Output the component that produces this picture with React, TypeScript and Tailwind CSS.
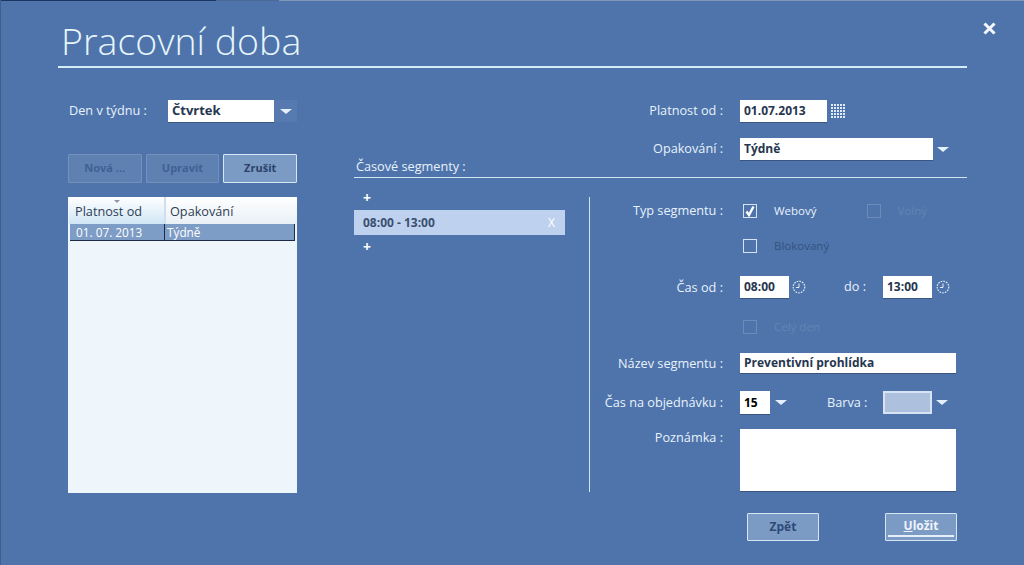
const font = "font-['Open_Sans','Noto_Sans',sans-serif]";

function Caret({ className = "" }: { className?: string }) {
  return (
    <svg width="12" height="5" viewBox="0 0 12 5" className={className}>
      <path d="M0 0h12L6 5z" fill="#e4f0fb" />
    </svg>
  );
}

function Label({ children }: { children: string }) {
  return <div className="w-[150px] shrink-0 pr-[17px] text-right text-[12.7px] leading-[17px] text-[#e8f2fb]">{children}</div>;
}

function Field({ value, className = "" }: { value?: string; className?: string }) {
  return (
    <div className={`flex items-center bg-white pl-1 text-[12px] font-bold text-[#26364f] shadow-[0_1px_0_#3a5680] ${className}`}>
      {value}
    </div>
  );
}

function Box({ checked, dim }: { checked?: boolean; dim?: boolean }) {
  return (
    <div className={`flex h-[14px] w-[14px] shrink-0 items-center justify-center border ${dim ? "border-[#6c8bb8]" : "border-[#d5e4f4]"}`}>
      {checked && (
        <svg width="12" height="12" viewBox="0 0 12 12">
          <path d="M2.5 6.5L5 10l4.5-8.5" fill="none" stroke="#fff" strokeWidth="2.4" />
        </svg>
      )}
    </div>
  );
}

function Option({ text, color, checked, dim }: { text: string; color: string; checked?: boolean; dim?: boolean }) {
  return (
    <div className="flex items-center">
      <Box checked={checked} dim={dim} />
      <span className={`ml-[17px] text-[11.5px] ${color}`}>{text}</span>
    </div>
  );
}

function ActionButton({ text, active }: { text: string; active?: boolean }) {
  return (
    <div
      className={`flex h-[29px] w-[74px] items-center justify-center rounded-[1px] border text-[11px] font-bold ${
        active ? "border-[#d5e6f5] bg-[#7b9ac4] text-[#2a4269]" : "border-[#7391bd] bg-[#5f81b2] text-[#3f6093]"
      }`}
    >
      {text}
    </div>
  );
}

function CalendarIcon() {
  return (
    <svg width="15" height="15" viewBox="0 0 15 15" className="ml-[4px]">
      <path d="M0 1h15M0 4h15M0 7h15M0 10h15M0 13h15" stroke="#dfeaf6" fill="none" strokeWidth="2" strokeDasharray="2 1" />
    </svg>
  );
}

function ClockIcon({ className = "" }: { className?: string }) {
  return (
    <svg width="14" height="14" viewBox="0 0 14 14" className={className}>
      <circle cx="7" cy="7" r="5.8" fill="none" stroke="#e4eef8" strokeWidth="1.2" strokeDasharray="1.6 1.1" />
      <path d="M7 3.5V7.5H4" fill="none" stroke="#e4eef8" />
    </svg>
  );
}

export default function App() {
  return (
    <div className={`relative flex h-[565px] w-[1024px] flex-col overflow-hidden border-l border-[#3f5f8f] bg-[#4e74ab] pl-[57px] pr-[57px] ${font}`}>
      {/* leftover of the window behind the dialog */}
      <div className="absolute left-0 top-0 flex h-[1px] w-full">
        <div className="w-[215px] bg-[#1d3560]" />
        <div className="w-[63px] bg-[#4a6a9c]" />
        <div className="flex-1 bg-[#8195b8]" />
      </div>

      <button className="absolute right-[28px] top-[22px] text-white">
        <svg width="13" height="13" viewBox="0 0 13 13">
          <path d="M1.5 1.5l10 10M11.5 1.5l-10 10" stroke="#f2f8fd" strokeWidth="3" />
        </svg>
      </button>

      <header className="h-[68px] shrink-0 border-b-2 border-[#d4eef7] pl-[3px] pt-[15px]">
        <h1 className="text-[37.5px] leading-[51px] font-light text-[#e6f5fb]">Pracovní doba</h1>
      </header>

      <div className="flex flex-1 pl-[10px] pt-[32px]">
        <section className="w-[229px] shrink-0">
          <div className="flex h-[22px] items-center">
            <span className="w-[100px] pl-[1px] text-[12.7px] text-[#e8f2fb]">Den v týdnu :</span>
            <Field value="Čtvrtek" className="h-[22px] w-[106px] text-[13px]" />
            <div className="flex h-[22px] w-[23px] items-center justify-center bg-[#5679af]">
              <Caret />
            </div>
          </div>

          <div className="mt-[32px] flex gap-[4px]">
            <ActionButton text="Nová ..." />
            <ActionButton text="Upravit" />
            <ActionButton text="Zrušit" active />
          </div>

          <div className="mt-[14px] h-[296px] w-[229px] bg-[#eef6fc]">
            <div className="flex h-[27px] pl-[1px] text-[12.7px] text-[#2d3d55]">
              <div className="relative w-[97px] border-r-2 border-[#cfdfee] bg-gradient-to-b from-white to-[#cfe6f5] pl-[6px] pt-[6px] leading-[17px]">
                Platnost od
                <svg width="6" height="3" viewBox="0 0 6 3" className="absolute left-[45px] top-[3px]">
                  <path d="M0 0h6L3 3z" fill="#8b97a8" />
                </svg>
              </div>
              <div className="flex-1 bg-gradient-to-b from-white to-[#e8f0f6] pl-[4px] pt-[6px] leading-[17px]">Opakování</div>
            </div>
            <div className="mx-[2px] flex h-[17px] border-b border-r border-[#1c2b45] bg-[#7d9cc6] text-[11.8px] leading-[16px] text-white">
              <div className="w-[95px] border-r border-[#1c2b45] pl-[6px]">01. 07. 2013</div>
              <div className="pl-[2px]">Týdně</div>
            </div>
          </div>
        </section>

        <section className="ml-[57px] flex-1">
          <div className="flex h-[22px] items-center pl-[286px]">
            <div className="w-[100px] shrink-0 pr-[17px] text-right text-[12.7px] text-[#e8f2fb]">Platnost od :</div>
            <Field value="01.07.2013" className="h-[22px] w-[87px]" />
            <CalendarIcon />
          </div>
          <div className="mt-[16px] flex h-[22px] items-center pl-[286px]">
            <div className="w-[100px] shrink-0 pr-[17px] text-right text-[12.7px] text-[#e8f2fb]">Opakování :</div>
            <Field value="Týdně" className="h-[22px] w-[193px]" />
            <Caret className="ml-[4px]" />
          </div>

          <div className="flex h-[18px] items-center border-b border-[#cfe6f2] pb-[3px] pl-[2px] text-[12.7px] text-[#e8f2fb]">
            Časové segmenty :
          </div>

          <div className="flex pt-[19px]">
            <div className="-mt-[6px] w-[211px] shrink-0">
              <div className="h-[14px] pl-[9px] text-[14px] font-bold leading-[14px] text-white">+</div>
              <div className="mt-[5px] flex h-[25px] items-center justify-between bg-[#bed2ef] pl-[9px] pr-[10px] text-[12px] font-bold text-[#3a4f70]">
                <span>08:00 - 13:00</span>
                <span className="font-normal text-white">X</span>
              </div>
              <div className="mt-[5px] h-[14px] pl-[9px] text-[14px] font-bold leading-[14px] text-white">+</div>
            </div>

            <div className="ml-[24px] h-[295px] w-[1px] bg-[#cfe6f2]" />

            <div className="-mt-[1px] flex flex-1 flex-col">
              <div className="flex h-[29px] items-center">
                <Label>Typ segmentu :</Label>
                <div className="ml-[3px]">
                  <Option text="Webový" color="text-[#e8f2fb]" checked />
                </div>
                <div className="ml-[50px]">
                  <Option text="Volný" color="text-[#6384b5]" dim />
                </div>
              </div>
              <div className="mt-[14px] flex h-[14px] items-center pl-[153px]">
                <Option text="Blokovaný" color="text-[#34527f]" />
              </div>

              <div className="mt-[23px] flex h-[22px] items-center">
                <Label>Čas od :</Label>
                <Field value="08:00" className="h-[22px] w-[49px]" />
                <ClockIcon className="ml-[3px]" />
                <span className="ml-[38px] w-[39px] text-[12.7px] text-[#e8f2fb]">do :</span>
                <Field value="13:00" className="h-[22px] w-[49px]" />
                <ClockIcon className="ml-[4px]" />
              </div>

              <div className="mt-[22px] flex h-[14px] items-center pl-[153px]">
                <Option text="Celý den" color="text-[#6384b5]" dim />
              </div>

              <div className="mt-[19px] flex h-[20px] items-center">
                <Label>Název segmentu :</Label>
                <Field value="Preventivní prohlídka" className="h-[20px] w-[216px]" />
              </div>

              <div className="mt-[18px] flex h-[23px] items-center">
                <Label>Čas na objednávku :</Label>
                <Field value="15" className="h-[23px] w-[30px] text-black" />
                <Caret className="ml-[5px]" />
                <span className="ml-[40px] w-[56px] text-[12.7px] text-[#e8f2fb]">Barva :</span>
                <div className="h-[23px] w-[49px] border-2 border-[#d6e3f2] bg-[#adc1de]" />
                <Caret className="ml-[4px]" />
              </div>

              <div className="mt-[15px] flex">
                <Label>Poznámka :</Label>
                <Field className="h-[62px] w-[216px]" />
              </div>
            </div>
          </div>

          <div className="mt-[21px] flex pl-[393px]">
            <div className="flex h-[28px] w-[72px] items-center justify-center rounded-[1px] border border-[#d5e6f5] bg-[#7b9ac4] text-[12px] font-bold text-[#2f4a78]">
              Zpět
            </div>
            <div className="ml-[66px] flex h-[28px] w-[72px] flex-col items-center justify-center rounded-[1px] border border-[#d5e6f5] bg-[#7b9ac4] text-[12px] font-bold leading-[15px] text-[#eef5fb]">
              <span>
                <span className="underline">U</span>ložit
              </span>
              <div className="mt-[2px] h-[2px] w-[66px] bg-[#e4eff9]" />
            </div>
          </div>
        </section>
      </div>
    </div>
  );
}
